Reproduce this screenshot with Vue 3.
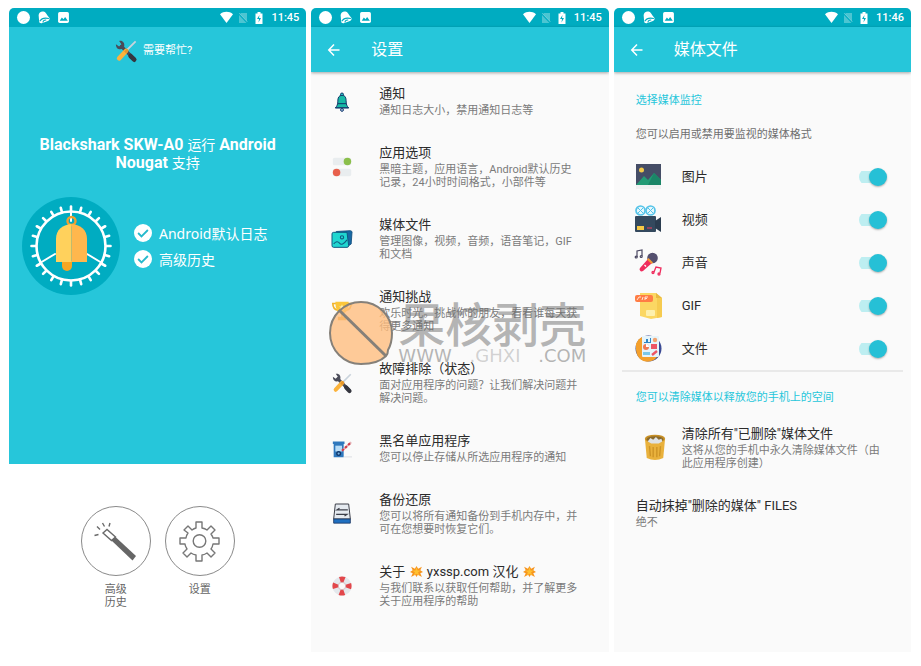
<script setup>
import { reactive } from 'vue'

const art = {
  dot: '<circle cx="12" cy="12" r="12" fill="#fff"/>',
  ring: '<path d="M4 20 3 8C3 3 8 0 12 1c4 1 5 4 7 7l4 5c1 3-1 5-4 6l-9 3c-3 1-6 0-6-2Z" fill="#fff"/><path d="M5 19c3-5 9-7 17-5M11 21c0-3 3-5 6-4" fill="none" stroke="#00acc1" stroke-width="2"/>',
  picture: '<rect x="2" y="2" width="20" height="20" rx="3" fill="#fff"/><path d="m5 18 4-6 3 3 3-4 5 7Z" fill="#00acc1"/>',
  wifi: '<path d="M0 6C7 0 17 0 24 6L12 22Z" fill="#fff"/>',
  sim: '<path d="M8 2h12v20H4V6Z" fill="#fff" opacity=".3"/><path d="m3 3 18 19" stroke="#00acc1" stroke-width="3"/><path d="m4 2 17 18" stroke="#fff" stroke-width="1.5" opacity=".4"/>',
  battery: '<path d="M5 3h4V0h6v3h4v21H5Z" fill="#fff"/><path d="M13 6 8 14h4l-1 7 5-9h-4Z" fill="#00acc1"/>',
  back: '<path d="M23 12H2M12 1 1.500 12 12 23" fill="none" stroke="#fff" stroke-width="3"/>',
  check: '<circle cx="12" cy="12" r="12" fill="#fff"/><path d="m5.500 12 4.500 4.500L18.500 8" fill="none" stroke="#26b9cc" stroke-width="2.400"/>',
  tools: '<path d="m7 7 14 14" stroke="#4a4b59" stroke-width="3.600" stroke-linecap="round"/><path d="M17 17.500 21 21.500" stroke="#35363f" stroke-width="5" stroke-linecap="round"/><path d="M1 4.500 4.500 7 7 4.500 4.500 1C8 0 11 3 10 7c-1 4-9 5-9-2.500Z" fill="#4a4b59"/><path d="M22.500 1.500 11 13" stroke="#c9d3dc" stroke-width="2"/><path d="m12 12-7.500 8" stroke="#fbb33c" stroke-width="5" stroke-linecap="round"/><path d="m14 10.500-3 3" stroke="#e6952a" stroke-width="3"/>',
  wand: '<g fill="none" stroke="#6a6a6a" stroke-width="1.400"><path d="m8 13 4-3.500 8.500 7.500-4 3.500Z"/><path d="m5 9.500-3-3M3.500 14.500l-4 1M9.500 6.500 7.500 3M14 6.500l1-3.500"/></g><path d="m16.500 20.500 4-3.500L41 36l-3.500 4.500Z" fill="#666"/>',
  gear: '<g fill="none" stroke="#777" stroke-width="1.400" stroke-linejoin="round"><path d="M17 2h6v6q3 .5 5 2l4-4 4 4-4 4q2 3 2 4h6v6h-6q-.5 3-2 5l4 4-4 4-4-4q-3 2-5 2v6h-6v-6q-3-.5-5-2l-4 4-4-4 4-4q-2-3-2-5H1v-6h6q.5-3 2-5L5 10l4-4 4 4q2-1.500 4-2Z"/><circle cx="20.500" cy="21" r="6.300"/></g>',
  bell: '<g stroke="#12386b" stroke-width="1.200"><circle cx="12" cy="3" r="1.800" fill="#28c3c7"/><path d="M12 4c-4 0-5 3-5 7 0 4-1 6-3 8h16c-2-2-3-4-3-7 0-5-1-8-5-8Z" fill="#17b9a6"/><path d="M6.500 14h11M4 19h16" fill="none"/><circle cx="12" cy="21.500" r="1.700" fill="#b7cdf0"/></g>',
  toggles: '<rect x="1" y="1" width="22" height="9" rx="2" fill="#e9edef"/><rect x="1" y="14" width="22" height="9" rx="2" fill="#e9edef"/><circle cx="18.500" cy="5.500" r="4.500" fill="#8bbf4b"/><circle cx="5.500" cy="18.500" r="4.500" fill="#e8604c"/>',
  gallery: '<path d="m5 3 17-1q2 0 2 2l-1 14-3 2Z" fill="#1769a4" stroke="#0f4a7b"/><path d="M0 6q0-2 2-2h16l2 16q0 2-2 2H2q-2 0-2-2Z" fill="#1fd6d0" stroke="#0f5a80" stroke-width="1.200"/><circle cx="12" cy="10" r="2" fill="none" stroke="#0f5a80" stroke-width="1.300"/><path d="M2 18q4-5 7-1t9-4" fill="none" stroke="#0f5a80" stroke-width="1.300"/>',
  trophy: '<path d="M5 3H1q0 7 6 8M19 3h4q0 7-6 8" fill="none" stroke="#f0b32c" stroke-width="2"/><path d="M4 1h16q0 14-8 14T4 1Z" fill="#fbc63a"/><path d="M11 14h2v5h4v4H7v-4h4Z" fill="#e9a52b"/><path d="m12 4 1 2.500h2.500l-2 1.700.8 2.500-2.300-1.500-2.300 1.500.8-2.500-2-1.700H11Z" fill="#fff3b8"/>',
  blacklist: '<path d="M1 3h14v3h-1v16H2V6H1Z" fill="#2f78bd"/><path d="M4 8h8v7H4Z" fill="#b7dcf7"/><circle cx="8" cy="17.500" r="3" fill="#12386b"/><circle cx="8" cy="17.500" r="1.300" fill="#7bb6e6"/><path d="m12 14 11-10" stroke="#e4b4b8" stroke-width="2.500"/><path d="m12 14 11-10" stroke="#d23c4a" stroke-width="2.500" stroke-dasharray="3 2"/><path d="M14 21.500h10" stroke="#d5d9dd"/>',
  backup: '<path d="M4 0h16l2 18H2Z" fill="#e5eaf0" stroke="#3c3f49" stroke-width="1.200"/><path d="M2 18h20v5H2Z" fill="#1f6fc0" stroke="#1c3764"/><path d="M19 7H6l3-2M5 12.500h13l-3 2" fill="none" stroke="#3c3f49" stroke-width="1.400"/>',
  buoy: '<circle cx="12" cy="12" r="8" fill="none" stroke="#e4e8ec" stroke-width="7"/><circle cx="12" cy="12" r="8" fill="none" stroke="#e2474b" stroke-width="7" stroke-dasharray="5.600 6.966" stroke-dashoffset="2.800"/><circle cx="12" cy="12" r="4.500" fill="none" stroke="#c9a9ad" stroke-width=".8"/>',
  spark: '<path d="m12 2 3 5 7-4-3 6.500 5 3.500-5 2 3 7-7.500-4-2.500 4-2.500-4L2 22l3-7-5-2 5-3.500L2 3l7 4Z" fill="#f7951e"/><path d="m12 4 2 6h6l-5 3.500 2 6-5-3.500-5 3.500 2-6L4 10h6Z" fill="#ffc02f"/>',
  photo: '<rect x="1" y="1" width="25" height="21" fill="#454d66"/><circle cx="6.500" cy="7" r="2.500" fill="#f3c94b"/><path d="m1 22 8-9 4 4 6-7 7 7v5Z" fill="#239b75"/><path d="m13 22 6-12 7 7v5Z" fill="#1b8567"/><rect x="1" y="22" width="25" height="4" fill="#f0f1f1"/>',
  camera: '<g fill="#e4f7fd" stroke="#54c3e8" stroke-width="1.700"><circle cx="5.500" cy="4.500" r="4.500"/><circle cx="15.500" cy="4.500" r="4.500"/><path d="m3 2 5 5m0-5L3 7M13 2l5 5m0-5-5 5" stroke-width="1"/></g><rect y="10" width="21" height="16" rx="1" fill="#34495e"/><path d="m20 15 6-4v15l-6-4Z" fill="#2b3c4f"/><rect x="2" y="20" width="7" height="4" fill="#f6c945"/><path d="M12 22h5" stroke="#b4435c" stroke-width="1.300"/>',
  mic: '<circle cx="17.500" cy="9" r="5.300" fill="#55506f"/><path d="m13 10 4 4-9 8q-2 1-3-.5t0-2.500Z" fill="#ef2d5e"/><path d="m13.500 9 4.500 4.500-1.500 1.500-4.500-4.500Z" fill="#f59a35"/><path d="m9.500 16 1.500 1.500" stroke="#fff" stroke-width="1.300"/><g fill="none" stroke="#4a4761" stroke-width="1.200"><path d="M2 8V2l5-1v6"/><circle cx="1.200" cy="8" r="1"/><circle cx="6.200" cy="7.500" r="1"/></g><g fill="none" stroke="#ef2d5e" stroke-width="1.300"><path d="m19 23 2-5 5 1-1 5"/><circle cx="18" cy="23.500" r="1"/><circle cx="24" cy="25" r="1"/></g>',
  gif: '<path d="M5 1h16l6 5v19l-11 2-11-3Z" fill="#fbd763"/><path d="m21 1 6 5h-6Z" fill="#e9b940"/><path d="M22 6h5v19l-5 1Z" fill="#f6cb50"/><rect y="3" width="18" height="7" rx="2" fill="#ff7d45"/><path d="m2 8 2-3h2M7 8l1-3M10 8V5h3m-3 1.500h2" fill="none" stroke="#ffe5d8"/><rect x="11" y="18" width="9" height="6" rx="1" fill="#fdf0ae"/>',
  files: '<circle cx="13.500" cy="13.500" r="13" fill="#3a4a94"/><path d="M3 5 8 3l2 22q-4-1-6-3Z" fill="#f4a02c"/><path d="M1 9q2-5 6-7v20h15l-3 3q-8 4-14-1-5-5-4-15Z" fill="#f4a02c"/><rect x="7" y="1" width="17" height="21" rx="1" fill="#e6f4fa"/><path d="M9 7h2V4h2v3h2V3h1v5H9Z" fill="#2f86c4"/><circle cx="20" cy="5" r="2.200" fill="#f3a26e"/><circle cx="11" cy="12" r="3" fill="#f07a54"/><path d="M11 12V9a3 3 0 0 1 3 3Z" fill="#fff"/><rect x="16" y="9" width="6" height="5" fill="#ed5565"/><rect x="8" y="17" width="7" height="3" fill="#7bc8e8"/><path d="m17 20 5-4" stroke="#ed5565" stroke-width="2.500"/>',
  trash: '<path d="M1 5h22l-2 21q-9 4-18 0Z" fill="#e9b13c"/><ellipse cx="12" cy="5" rx="11" ry="4.500" fill="#c78f25"/><ellipse cx="12" cy="5.500" rx="9" ry="3.300" fill="#8a6a2c"/><path d="m4 8 3-4 3 2 3-3 3 3 3-1 1 3-4 2H8Z" fill="#dfe2e5"/><path d="m6 13 1 11M10 14v11M14 14v11M18 13l-1 11" stroke="#cd9326" stroke-width="1.500"/>'
}

const ticks = Array.from({ length: 24 }, (_, i) => i * 15)

const settings = [
  { icon: 'bell', title: '通知', desc: '通知日志大小，禁用通知日志等' },
  { icon: 'toggles', title: '应用选项', desc: '黑暗主题，应用语言，Android默认历史记录，24小时时间格式，小部件等' },
  { icon: 'gallery', title: '媒体文件', desc: '管理图像，视频，音频，语音笔记，GIF和文档' },
  { icon: 'trophy', title: '通知挑战', desc: '欢乐时光。挑战你的朋友，看看谁每天获得更多通知' },
  { icon: 'tools', title: '故障排除（状态）', desc: '面对应用程序的问题？让我们解决问题并解决问题。' },
  { icon: 'blacklist', title: '黑名单应用程序', desc: '您可以停止存储从所选应用程序的通知' },
  { icon: 'backup', title: '备份还原', desc: '您可以将所有通知备份到手机内存中，并可在您想要时恢复它们。' },
  { icon: 'buoy', title: '关于', site: 'yxssp.com 汉化', desc: '与我们联系以获取任何帮助，并了解更多关于应用程序的帮助' }
]

const media = reactive([
  { id: 'photo', label: '图片', on: true },
  { id: 'camera', label: '视频', on: true },
  { id: 'mic', label: '声音', on: true },
  { id: 'gif', label: 'GIF', on: true },
  { id: 'files', label: '文件', on: true }
])

const screens = [
  { id: 'home', time: '11:45' },
  { id: 'settings', time: '11:45', title: '设置' },
  { id: 'media', time: '11:46', title: '媒体文件' }
]
</script>

<template>
  <div class="page">
    <section v-for="s in screens" :key="s.id" class="phone" :class="s.id">
      <div class="status">
        <div class="notices">
          <svg class="s14" viewBox="0 0 24 24" v-html="art.dot"></svg>
          <svg class="s14" viewBox="0 0 24 24" v-html="art.ring"></svg>
          <svg class="s14" viewBox="0 0 24 24" v-html="art.picture"></svg>
        </div>
        <div class="signals">
          <svg class="s14" viewBox="0 0 24 24" v-html="art.wifi"></svg>
          <svg class="s12" viewBox="0 0 24 24" v-html="art.sim"></svg>
          <svg class="s12" viewBox="0 0 24 24" v-html="art.battery"></svg>
        </div>
        <span class="time">{{ s.time }}</span>
      </div>

      <header v-if="s.title" class="appbar">
        <button class="back" aria-label="返回"><svg viewBox="0 0 24 24" v-html="art.back"></svg></button>
        <h1>{{ s.title }}</h1>
      </header>

      <template v-if="s.id === 'home'">
        <div class="hero">
          <a href="#help" class="help">
            <svg viewBox="0 0 24 24" v-html="art.tools"></svg>
            <span>需要帮忙?</span>
          </a>
          <h2>Blackshark SKW-A0 <span>运行</span> Android Nougat <span>支持</span></h2>
          <div class="feature">
            <svg class="emblem" viewBox="0 0 98 98">
              <circle cx="49" cy="49" r="49" fill="#00acc1" />
              <g fill="none" stroke="#fff" stroke-width="2.6" stroke-linecap="round">
                <circle cx="49" cy="49" r="34.5" />
                <path v-for="t in ticks" :key="t" d="M49 14V9.500" :transform="`rotate(${t} 49 49)`" />
                <path d="M49 14v10M65 57l15 9M33 57l-15 9" stroke-width="2" />
              </g>
              <circle cx="49.500" cy="24" r="4" fill="none" stroke="#f0a030" stroke-width="2.4" />
              <path d="M40 64h10v5a5 5 0 0 1-10 0Z" fill="#f5a623" />
              <path d="M34 65V42c0-9 6-14 15.500-15v38Z" fill="#ffd15c" />
              <path d="M49.500 27c9.500 1 15.500 6 15.500 15v23H49.500Z" fill="#ffb74d" />
            </svg>
            <ul>
              <li><svg viewBox="0 0 24 24" v-html="art.check"></svg>Android默认日志</li>
              <li><svg viewBox="0 0 24 24" v-html="art.check"></svg>高级历史</li>
            </ul>
          </div>
        </div>
        <nav class="shortcuts">
          <button>
            <span class="disc"><svg viewBox="0 0 42 42" v-html="art.wand"></svg></span>
            <span class="caption">高级历史</span>
          </button>
          <button>
            <span class="disc"><svg viewBox="0 0 42 42" v-html="art.gear"></svg></span>
            <span class="caption">设置</span>
          </button>
        </nav>
      </template>

      <template v-else-if="s.id === 'settings'">
        <nav class="list">
          <a v-for="item in settings" :key="item.icon" href="#" class="entry">
            <svg class="icon" viewBox="0 0 24 24" v-html="art[item.icon]"></svg>
            <span class="copy">
              <span class="title">{{ item.title }}
                <template v-if="item.site"><svg class="spark" viewBox="0 0 24 24" v-html="art.spark"></svg> {{ item.site }} <svg class="spark" viewBox="0 0 24 24" v-html="art.spark"></svg></template>
              </span>
              <span class="desc">{{ item.desc }}</span>
            </span>
          </a>
        </nav>
        <div class="watermark">
          <svg viewBox="0 0 64 64">
            <path d="M56 55C50 61 40 63 31 63A31 31 0 1 1 62 32c0 8-1 12-4 17q0 4-2 6Z" fill="#ffbd7c" fill-opacity=".78" stroke="#858079" stroke-width="2" />
            <path d="m9 9 47 46" stroke="#858079" stroke-width="3" />
          </svg>
          <div class="brand">
            <span class="name">果核剥壳</span>
            <span class="domain"><span>WWW</span><span class="pale">.GHXI</span><span>.COM</span></span>
          </div>
        </div>
      </template>

      <main v-else class="options">
        <h3>选择媒体监控</h3>
        <p class="note">您可以启用或禁用要监视的媒体格式</p>
        <div class="rows">
          <label v-for="m in media" :key="m.id" class="row">
            <svg class="pic" viewBox="0 0 27 27" v-html="art[m.id]"></svg>
            <span class="title">{{ m.label }}</span>
            <input v-model="m.on" type="checkbox" role="switch" />
          </label>
        </div>
        <hr />
        <h3>您可以清除媒体以释放您的手机上的空间</h3>
        <button class="clear">
          <svg viewBox="0 0 24 29" v-html="art.trash"></svg>
          <span class="copy">
            <span class="title">清除所有"已删除"媒体文件</span>
            <span class="desc">这将从您的手机中永久清除媒体文件（由此应用程序创建）</span>
          </span>
        </button>
        <button class="auto">
          <span class="title">自动抹掉"删除的媒体" FILES</span>
          <span class="desc">绝不</span>
        </button>
      </main>
    </section>
  </div>
</template>

<style>
body {
  background: #fff;
}
</style>

<style scoped>
.page {
  box-sizing: border-box;
  min-height: 100vh;
  padding: 8px 10px 14px 9px;
  display: grid;
  grid-template-columns: repeat(3, 1fr);
  gap: 5px;
  font-family: Roboto, "Noto Sans CJK SC", sans-serif;
}
h1, h2, h3, p, ul {
  margin: 0;
  padding: 0;
  font-weight: 400;
}
svg {
  display: block;
  flex: none;
  overflow: visible;
}
button {
  font: inherit;
  border: 0;
  padding: 0;
  background: none;
  text-align: left;
  cursor: pointer;
}
a {
  color: inherit;
  text-decoration: none;
}
.phone {
  position: relative;
  background: #fafafa;
  border-radius: 5px 5px 0 0;
  overflow: hidden;
}
.home {
  background: #fff;
}
.status {
  height: 19px;
  padding: 0 7px 0 8px;
  display: flex;
  align-items: center;
  gap: 6px;
  background: #00acc1;
  color: #fff;
}
.notices {
  flex: 1;
  display: flex;
  align-items: center;
  gap: 7px;
}
.signals {
  display: flex;
  align-items: center;
  gap: 4px;
}
.s14 {
  width: 13px;
  height: 13px;
}
.s12 {
  width: 12px;
  height: 12px;
}
.time {
  font-size: 11px;
  font-weight: 500;
}
.appbar {
  position: relative;
  height: 45px;
  padding-left: 16px;
  display: flex;
  align-items: center;
  gap: 30px;
  background: #26c6da;
  color: #fff;
  box-shadow: 0 1px 3px rgba(0, 0, 0, 0.35);
}
.back svg {
  width: 14px;
  height: 12px;
}
.appbar h1 {
  font-size: 16px;
  line-height: 20px;
}
.hero {
  padding: 12px 13px 169px;
  background: #26c6da;
  color: #fff;
}
.help {
  display: flex;
  justify-content: center;
  align-items: center;
  gap: 6px;
  height: 23px;
  padding-right: 8px;
  font-size: 11px;
  line-height: 16px;
}
.help svg {
  width: 22px;
  height: 22px;
}
.hero h2 {
  max-width: 256px;
  margin: 74px auto 0;
  text-align: center;
  font-size: 16px;
  font-weight: 700;
  line-height: 18px;
}
.hero h2 span {
  font-size: 14px;
  font-weight: 400;
}
.feature {
  margin-top: 25px;
  display: flex;
  align-items: center;
  gap: 14px;
}
.emblem {
  width: 98px;
  height: 98px;
}
.feature ul {
  list-style: none;
}
.feature li {
  display: flex;
  align-items: center;
  gap: 7px;
  height: 26px;
  font-family: "Noto Sans", "Noto Sans CJK SC", sans-serif;
  font-size: 14px;
}
.feature li svg {
  width: 18px;
  height: 18px;
}
.shortcuts {
  display: flex;
  justify-content: center;
  gap: 14px;
  padding-top: 42px;
}
.shortcuts button {
  display: flex;
  flex-direction: column;
  align-items: center;
  gap: 7px;
}
.disc {
  box-sizing: border-box;
  width: 70px;
  height: 70px;
  display: grid;
  place-items: center;
  border: 1px solid #8a8a8a;
  border-radius: 50%;
}
.disc svg {
  width: 42px;
  height: 42px;
}
.caption {
  width: 2em;
  font-size: 11px;
  line-height: 13px;
  color: #666;
}
.entry {
  display: flex;
  align-items: center;
  gap: 27px;
  padding: 0 27px 0 21px;
}
.icon {
  width: 20px;
  height: 20px;
}
.copy {
  flex: 1;
}
.entry .copy {
  padding: 12px 0 14px;
}
.title {
  display: block;
  font-size: 13px;
  line-height: 20px;
  color: #2b2b2b;
}
.desc {
  display: block;
  font-size: 11px;
  line-height: 13px;
  color: #7a7a7a;
}
.entry .desc {
  padding-right: 3px;
}
.spark {
  display: inline-block;
  width: 15px;
  height: 13px;
  vertical-align: -2px;
}
.watermark {
  position: absolute;
  top: 292px;
  left: 19px;
  display: flex;
  align-items: center;
  gap: 4px;
  pointer-events: none;
}
.watermark > svg {
  width: 64px;
  height: 64px;
}
.brand {
  padding-top: 6px;
  color: rgba(110, 110, 110, 0.5);
}
.name {
  display: block;
  font-size: 47px;
  font-weight: 500;
  line-height: 40px;
}
.domain {
  display: flex;
  justify-content: space-between;
  font-family: "DejaVu Sans", sans-serif;
  font-size: 18px;
  line-height: 20px;
}
.pale {
  color: rgba(110, 110, 110, 0.3);
}
.options {
  padding: 21px 8px 0;
}
.options h3,
.note {
  padding-left: 14px;
  font-size: 11px;
  line-height: 16px;
}
.options h3 {
  color: #26c6da;
}
.note {
  margin-top: 18px;
  color: #6f6f6f;
}
.rows {
  margin-top: 12px;
}
.row {
  height: 43px;
  padding: 0 16px 0 13px;
  display: flex;
  align-items: center;
  gap: 20px;
}
.pic {
  width: 27px;
  height: 27px;
}
.row .title {
  flex: 1;
}
.row input {
  appearance: none;
  position: relative;
  width: 28px;
  height: 18px;
  margin: 0;
  background: linear-gradient(#bdeef1, #bdeef1) left center / 24px 12px no-repeat;
  border-radius: 9px;
}
.row input::before {
  content: "";
  position: absolute;
  top: 0;
  left: 0;
  width: 18px;
  height: 18px;
  border-radius: 50%;
  background: #f1f1f1;
  box-shadow: 0 1px 2px rgba(0, 0, 0, 0.3);
}
.row input:checked::before {
  left: 10px;
  background: #26c0d6;
}
hr {
  height: 2px;
  margin: 0 0 18px;
  border: 0;
  background: #e9e9e9;
}
.clear {
  width: 100%;
  margin-top: 18px;
  padding: 0 18px 0 22px;
  display: flex;
  align-items: center;
  gap: 16px;
}
.clear svg {
  width: 22px;
  height: 29px;
}
.auto {
  display: block;
  margin-top: 26px;
  padding-left: 14px;
}
</style>
